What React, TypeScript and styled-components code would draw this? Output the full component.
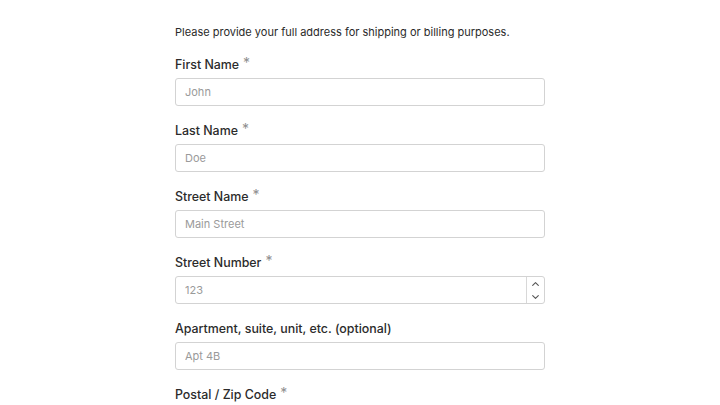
import React from "react";
import styled, { createGlobalStyle } from "styled-components";

const Global = createGlobalStyle`
  html, body { margin: 0; padding: 0; background: #ffffff; }
  body { font-family: Inter, "Noto Sans", sans-serif; color: #2b2b2b; }
  * { box-sizing: border-box; }
`;

const Page = styled.div`
  display: flex;
  justify-content: center;
  padding-top: 24px;
`;

const Form = styled.form`
  width: 370px;
  display: flex;
  flex-direction: column;
`;

const Intro = styled.p`
  margin: 0 0 16px 0;
  font-size: 11px;
  line-height: 16px;
  color: #2a2a2a;
`;

const Field = styled.div`
  display: flex;
  flex-direction: column;
  gap: 4px;
  margin-bottom: 16px;
`;

const Label = styled.label`
  font-size: 12.4px;
  font-weight: 500;
  line-height: 18px;
  color: #2b2b2b;
  display: flex;
  align-items: flex-start;
  gap: 4px;
`;

const Star = styled.span`
  color: #8f8f8f;
  font-size: 14px;
  line-height: 14px;
  font-weight: 400;
`;

const InputWrap = styled.div`
  display: flex;
  height: 28px;
  border: 1px solid #d3d3d3;
  border-radius: 3px;
  background: #fff;
  overflow: hidden;
`;

const Input = styled.input`
  flex: 1;
  min-width: 0;
  border: none;
  outline: none;
  padding: 0 9px;
  font-family: Inter, "Noto Sans", sans-serif;
  font-size: 11px;
  color: #2b2b2b;
  background: transparent;
  &::placeholder { color: #9a9a9a; }
`;

const Spinner = styled.div`
  width: 18px;
  border-left: 1px solid #d8d8d8;
  display: grid;
  grid-template-rows: 1fr 1fr;
  justify-items: center;
  align-items: center;
`;

const Chevron = ({ up }: { up?: boolean }) => (
  <svg width="7" height="4" viewBox="0 0 7 4" fill="none">
    <path
      d={up ? "M0.7 3.4 L3.5 0.7 L6.3 3.4" : "M0.7 0.6 L3.5 3.3 L6.3 0.6"}
      stroke="#555"
      strokeWidth="1.1"
      strokeLinecap="round"
      strokeLinejoin="round"
    />
  </svg>
);

type F = { label: string; placeholder: string; required?: boolean; number?: boolean };

const fields: F[] = [
  { label: "First Name", placeholder: "John", required: true },
  { label: "Last Name", placeholder: "Doe", required: true },
  { label: "Street Name", placeholder: "Main Street", required: true },
  { label: "Street Number", placeholder: "123", required: true, number: true },
  { label: "Apartment, suite, unit, etc. (optional)", placeholder: "Apt 4B" },
  { label: "Postal / Zip Code", placeholder: "12345", required: true },
];

export default function App() {
  return (
    <>
      <Global />
      <Page>
        <Form>
          <Intro>Please provide your full address for shipping or billing purposes.</Intro>
          {fields.map((f) => (
            <Field key={f.label}>
              <Label>
                {f.label}
                {f.required && <Star>*</Star>}
              </Label>
              <InputWrap>
                <Input placeholder={f.placeholder} />
                {f.number && (
                  <Spinner>
                    <Chevron up />
                    <Chevron />
                  </Spinner>
                )}
              </InputWrap>
            </Field>
          ))}
        </Form>
      </Page>
    </>
  );
}
